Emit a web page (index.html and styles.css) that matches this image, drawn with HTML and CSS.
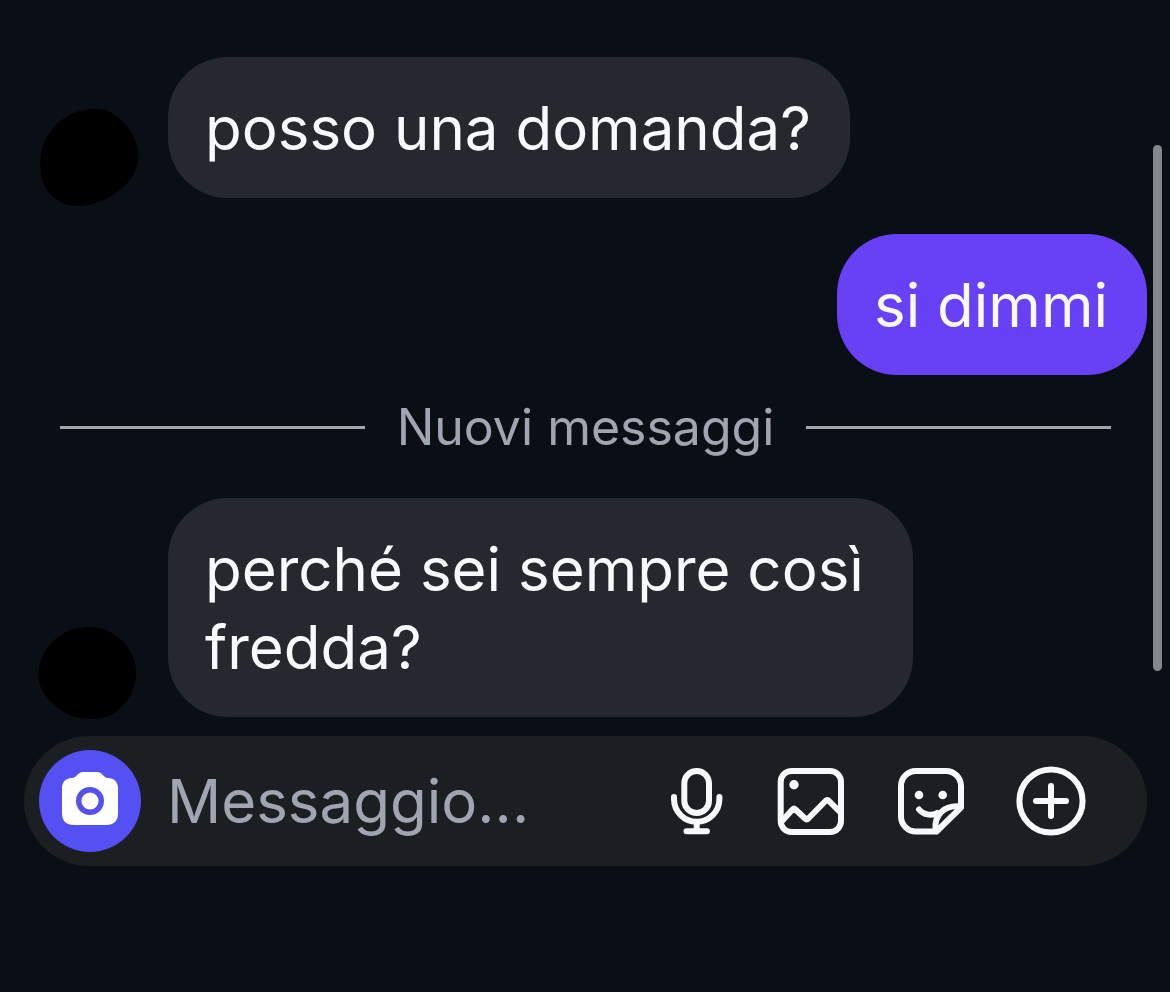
FILE: index.html
```
<!DOCTYPE html>
<html lang="it">
<head>
  <meta charset="UTF-8" />
  <meta name="viewport" content="width=device-width, initial-scale=1.0"/>
  <title>Chat</title>
  <link rel="stylesheet" href="styles.css">
</head>
<body>

  <main class="chat">
    <div class="message received">
      <svg class="avatar" viewBox="0 0 100 100" aria-hidden="true">
        <path d="M54 11C72 9 84 21 94 35C103 50 103 67 92 82C78 98 58 108 42 108C21 109 7 95 3 78C1 61 3 45 12 34C23 20 36 12 54 11Z"/>
      </svg>
      <p class="bubble">posso una domanda?</p>
    </div>

    <div class="message sent">
      <p class="bubble">si dimmi</p>
    </div>

    <div class="divider"><span>Nuovi messaggi</span></div>

    <div class="message received">
      <svg class="avatar" viewBox="0 0 100 100" aria-hidden="true">
        <path d="M47 10C72 8 96 28 98 52C99 69 92 84 79 94C66 105 51 102 37 100C23 96 5 81 1 65C-3 36 19 12 47 10Z"/>
      </svg>
      <p class="bubble">perché sei sempre così fredda?</p>
    </div>
  </main>

  <form class="composer">
    <button type="button" class="camera" aria-label="Fotocamera">
      <svg viewBox="0 0 102 102">
        <path fill="#fff" d="M44 22H58C64 22 64 28 69 28C75 28 79 32 79 38V63C79 71 75 75 67 75H35C27 75 23 71 23 63V38C23 32 27 28 33 28C38 28 38 22 44 22Z"/>
        <circle cx="51" cy="51" r="11.3" fill="#fff" stroke="#5550f0" stroke-width="5.4"/>
      </svg>
    </button>
    <input type="text" class="field" placeholder="Messaggio..." aria-label="Messaggio">
    <div class="actions">
      <button type="button" aria-label="Messaggio vocale">
        <svg viewBox="0 0 72 72">
          <rect x="29.3" y="6" width="24.7" height="42" rx="12.3"/>
          <path d="M19 32v2a22.7 22.7 0 0 0 45.4 0v-2M41.700 57v9M31.500 66.200h20.400"/>
        </svg>
      </button>
      <button type="button" aria-label="Galleria">
        <svg viewBox="0 0 72 72">
          <rect x="5.7" y="6" width="60.3" height="61" rx="11"/>
          <path d="M7 56L17.500 44.500Q19 43 20.500 44.500L30 53.500Q31.700 55 33.300 53.500L50.500 36Q52.300 34 54 36L65 47"/>
          <circle class="dot" cx="19" cy="19.700" r="4.700"/>
        </svg>
      </button>
      <button type="button" aria-label="Adesivi">
        <svg viewBox="0 0 72 72">
          <path d="M66 42.500V21A15 15 0 0 0 51 6H21A15 15 0 0 0 6 21V51.500A15 15 0 0 0 21 66.500H41.500Z"/>
          <path d="M40.500 65C39 50 49 40 65 41.500M24 44.500C28 49.500 36 51.500 42 48"/>
          <circle class="dot" cx="24" cy="30" r="4.300"/>
          <circle class="dot" cx="47.700" cy="30" r="4.300"/>
        </svg>
      </button>
      <button type="button" aria-label="Altro">
        <svg viewBox="0 0 72 72">
          <circle cx="36" cy="36" r="31.600"/>
          <path d="M36 21v30M21 36h30"/>
        </svg>
      </button>
    </div>
  </form>

  <div class="scrollbar"></div>

</body>
</html>
```
FILE: styles.css
```
* {
  box-sizing: border-box;
}
body {
  margin: 0;
  min-height: 100vh;
  background: #0a0f16;
  color: #f7f9fc;
  font-family: Inter, "Liberation Sans", sans-serif;
  font-size: 60px;
  line-height: 78px;
}
.chat {
  padding: 57px 23px 19px 38px;
}
.message {
  display: flex;
  align-items: flex-end;
  gap: 30px;
}
.sent {
  justify-content: flex-end;
  margin-top: 36px;
}
.avatar {
  flex: none;
  width: 100px;
  height: 100px;
  overflow: visible;
}
.bubble {
  max-width: 745px;
  margin: 0;
  padding: 32px 39px 31px 37px;
  border-radius: 60px;
  background: #25292f;
}
.sent .bubble {
  background: #6841f6;
}
.divider {
  display: flex;
  align-items: center;
  gap: 32px;
  margin: 22px 36px 41px 22px;
  color: #a1a5b1;
  font-size: 50px;
  line-height: 60px;
}
.divider::before,
.divider::after {
  content: "";
  flex: 1;
  height: 3px;
  background: #a1a5b1;
}
.composer {
  display: flex;
  align-items: center;
  height: 130px;
  margin: 0 23px 0 24px;
  padding: 0 60px 0 15px;
  border-radius: 65px;
  background: #1c1f21;
}
button {
  flex: none;
  padding: 0;
  border: none;
  background: none;
  cursor: pointer;
}
svg {
  display: block;
}
.camera {
  width: 102px;
  height: 102px;
  border-radius: 50%;
  background: #5550f3;
}
.field {
  flex: 1;
  min-width: 0;
  margin-left: 26px;
  padding: 0;
  border: none;
  outline: none;
  background: none;
  color: inherit;
  font: inherit;
}
.field::placeholder {
  color: #a1a5b1;
  opacity: 1;
}
.actions {
  display: flex;
  gap: 48px;
}
.actions svg {
  width: 72px;
  height: 72px;
  fill: none;
  stroke: #f7f9fc;
  stroke-width: 6;
  stroke-linecap: round;
  stroke-linejoin: round;
}
.actions .dot {
  fill: #f7f9fc;
  stroke: none;
}
.scrollbar {
  position: absolute;
  top: 145px;
  right: 8px;
  width: 9px;
  height: 526px;
  border-radius: 5px;
  background: #84888b;
}
```
